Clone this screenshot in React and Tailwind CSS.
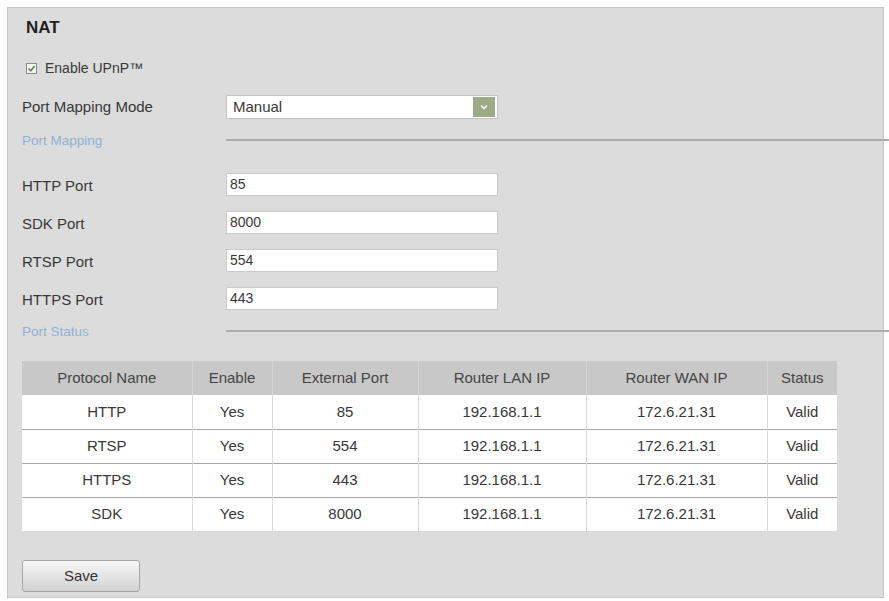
import React from "react";

const ports = [
  { label: "HTTP Port", value: "85" },
  { label: "SDK Port", value: "8000" },
  { label: "RTSP Port", value: "554" },
  { label: "HTTPS Port", value: "443" },
];

const rows = [
  ["HTTP", "Yes", "85", "192.168.1.1", "172.6.21.31", "Valid"],
  ["RTSP", "Yes", "554", "192.168.1.1", "172.6.21.31", "Valid"],
  ["HTTPS", "Yes", "443", "192.168.1.1", "172.6.21.31", "Valid"],
  ["SDK", "Yes", "8000", "192.168.1.1", "172.6.21.31", "Valid"],
];

const headers = ["Protocol Name", "Enable", "External Port", "Router LAN IP", "Router WAN IP", "Status"];
const widths = ["w-[170px]", "w-[80px]", "w-[146px]", "w-[168px]", "w-[181px]", "w-[70px]"];

const SectionTitle = ({ children }) => (
  <div className="flex items-center h-[20px]">
    <span className="w-[204px] text-[13.5px] text-[#8db3d6]">{children}</span>
    <div className="flex-1 h-[2px] bg-[#adadad] -mr-[6px] -mt-[2px]"></div>
  </div>
);

const App = () => {
  return (
    <div className="min-h-screen bg-white pt-[7px] pl-[7px] pr-[5px] font-['Liberation_Sans',Arial,sans-serif]">
      <div className="h-[591px] bg-[#dcdcdc] border border-[#c6c6c6] pl-[14px] pt-[10px] text-[15px] text-[#383838]">
        {/* Title */}
        <h1 className="text-[17px] font-bold h-[20px] leading-[20px] text-[#1f1f1f] pl-[4px]">NAT</h1>

        {/* UPnP */}
        <div className="mt-[20px] h-[20px] flex items-center pl-[4px] gap-[8px]">
          <span className="w-[11px] h-[11px] border border-[#8a8a8a] bg-[#f2f6ee] flex items-center justify-center">
            <svg width="9" height="9" viewBox="0 0 9 9">
              <path d="M1.5 4.5 L3.7 6.7 L7.6 2" fill="none" stroke="#4f8a3c" strokeWidth="1.6" />
            </svg>
          </span>
          <span className="text-[14px]">Enable UPnP™</span>
        </div>

        {/* Mode */}
        <div className="mt-[17px] h-[24px] flex items-center">
          <span className="w-[204px]">Port Mapping Mode</span>
          <div className="w-[272px] h-[24px] bg-white border border-[#c4c4c4] flex items-center justify-between pl-[6px] pr-[2px]">
            <span>Manual</span>
            <span className="w-[22px] h-[20px] bg-[#9cab86] flex items-center justify-center">
              <svg width="10" height="8" viewBox="0 0 10 8">
                <path d="M2 2.5 L5 5.5 L8 2.5" fill="none" stroke="#f4f7ee" strokeWidth="1.6" />
              </svg>
            </span>
          </div>
        </div>

        {/* Port Mapping */}
        <div className="mt-[12px]">
          <SectionTitle>Port Mapping</SectionTitle>
        </div>

        <div className="mt-[22px] flex flex-col gap-[15px]">
          {ports.map((p) => (
            <div key={p.label} className="h-[23px] flex items-center">
              <span className="w-[204px] pt-[3px]">{p.label}</span>
              <div className="w-[272px] h-[23px] bg-white border border-[#cbcbcb] pl-[3px] flex items-center text-[14px]">
                {p.value}
              </div>
            </div>
          ))}
        </div>

        {/* Port Status */}
        <div className="mt-[12px]">
          <SectionTitle>Port Status</SectionTitle>
        </div>

        <table className="mt-[19px] border-collapse text-center">
          <thead>
            <tr className="bg-[#c8c8c8] h-[34px]">
              {headers.map((h, i) => (
                <th key={h} className={`${widths[i]} font-normal text-[#444] border-l border-[#d6d6d6] first:border-l-0`}>
                  {h}
                </th>
              ))}
            </tr>
          </thead>
          <tbody>
            {rows.map((r, ri) => (
              <tr key={ri} className="bg-white h-[34px] border-t border-[#a8a8a8] first:border-t-0">
                {r.map((c, ci) => (
                  <td key={ci} className="border-l border-[#d8d8d8] first:border-l-0 text-[#383838]">
                    {c}
                  </td>
                ))}
              </tr>
            ))}
          </tbody>
        </table>

        {/* Save */}
        <button className="mt-[29px] w-[118px] h-[32px] rounded-[3px] border border-[#a6a6a6] bg-gradient-to-b from-[#f7f7f7] to-[#d2d2d2] text-[#333] text-[15px]">
          Save
        </button>
      </div>
    </div>
  );
};

export default App;
